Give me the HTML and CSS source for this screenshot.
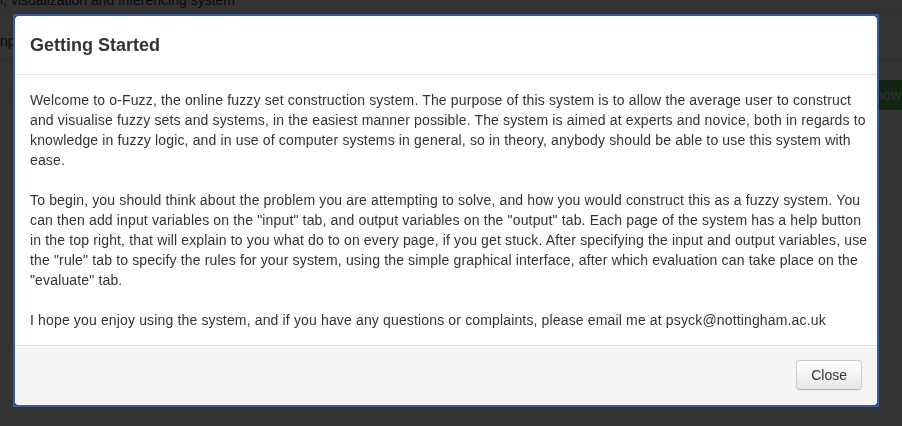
FILE: index.html
```html
<!DOCTYPE html>
<html>
<head>
<meta charset="utf-8">
<link rel="stylesheet" href="styles.css">
</head>
<body>
<div class="page">
  <div class="page-title">l, visualization and inferencing system</div>
  <div class="tabs">
    <span class="tab active">Input</span>
  </div>
  <div class="row">
    <div class="well"></div>
    <button class="show">Show</button>
  </div>
</div>
<div class="overlay">
  <div class="frame">
    <div class="modal">
      <div class="modal-header">
        <h3>Getting Started</h3>
      </div>
      <div class="modal-body">
        <p>Welcome to o-Fuzz, the online fuzzy set construction system. The purpose of this system is to allow the average user to construct and visualise fuzzy sets and systems, in the easiest manner possible. The system is aimed at experts and novice, both in regards to knowledge in fuzzy logic, and in use of computer systems in general, so in theory, anybody should be able to use this system with ease.</p>
        <p>To begin, you should think about the problem you are attempting to solve, and how you would construct this as a fuzzy system. You can then add input variables on the "input" tab, and output variables on the "output" tab. Each page of the system has a help button in the top right, that will explain to you what do to on every page, if you get stuck. After specifying the input and output variables, use the "rule" tab to specify the rules for your system, using the simple graphical interface, after which evaluation can take place on the "evaluate" tab.</p>
        <p>I hope you enjoy using the system, and if you have any questions or complaints, please email me at psyck@nottingham.ac.uk</p>
      </div>
      <div class="modal-footer">
        <button class="btn">Close</button>
      </div>
    </div>
  </div>
</div>
</body>
</html>
```

FILE: styles.css
```css
html, body {
  margin: 0;
  padding: 0;
  background: #fff;
  overflow: hidden;
}
body {
  font-family: "Liberation Sans", Arial, sans-serif;
  font-size: 14px;
  line-height: 20px;
  color: #333;
  width: 902px;
  height: 426px;
}
.page {
  width: 902px;
}
.page-title {
  margin-top: -10px;
  font-size: 14px;
  line-height: 20px;
  height: 21px;
  border-bottom: 1px solid #e5e5e5;
  white-space: nowrap;
}
.tabs {
  display: flex;
  height: 47px;
  border-bottom: 1px solid #ddd;
}
.tab {
  margin-left: -4px;
  padding: 0 12px 0 0;
  line-height: 20px;
  font-size: 14px;
  margin-top: 19px;
}
.row {
  display: flex;
  justify-content: space-between;
  margin-top: 20px;
  height: 30px;
}
.well {
  margin-left: 11px;
  width: 200px;
  height: 24px;
  margin-top: 3px;
  border: 1px solid #ccc;
  border-radius: 4px;
}
.show {
  font-family: "Liberation Sans", Arial, sans-serif;
  font-size: 14px;
  height: 30px;
  width: 60px;
  margin-right: -20px;
  padding: 0 0 0 4px;
  text-align: left;
  background: #62b562;
  color: #fff;
  border: 0;
  border-radius: 4px;
}
.overlay {
  position: fixed;
  inset: 0;
  background: rgba(0, 0, 0, 0.8);
  padding: 14px 0 0 13px;
}
.frame {
  width: 862px;
  border: 2px solid #3b5a98;
}
.modal {
  background: #fff;
  border-radius: 4px;
  overflow: hidden;
}
.modal-header {
  padding: 15px;
  border-bottom: 1px solid #e5e5e5;
}
.modal-header h3 {
  margin: 0;
  font-size: 18px;
  line-height: 28px;
  font-weight: bold;
  color: #333;
}
.modal-body {
  padding: 15px 4px 15px 15px;
  letter-spacing: 0.15px;
}
.modal-body p {
  margin: 0 0 20px;
}
.modal-body p:last-child {
  margin-bottom: 0;
}
.modal-footer {
  display: flex;
  justify-content: flex-end;
  padding: 14px 15px 15px;
  background: #f5f5f5;
  border-top: 1px solid #ddd;
  box-shadow: inset 0 1px 0 #fff;
}
.btn {
  font-family: "Liberation Sans", Arial, sans-serif;
  font-size: 14px;
  line-height: 20px;
  color: #333;
  padding: 4px 14px;
  height: 30px;
  background: linear-gradient(#ffffff, #e6e6e6);
  border: 1px solid #cccccc;
  border-bottom-color: #b3b3b3;
  border-radius: 4px;
  box-shadow: inset 0 1px 0 rgba(255,255,255,.2), 0 1px 2px rgba(0,0,0,.05);
}
```
